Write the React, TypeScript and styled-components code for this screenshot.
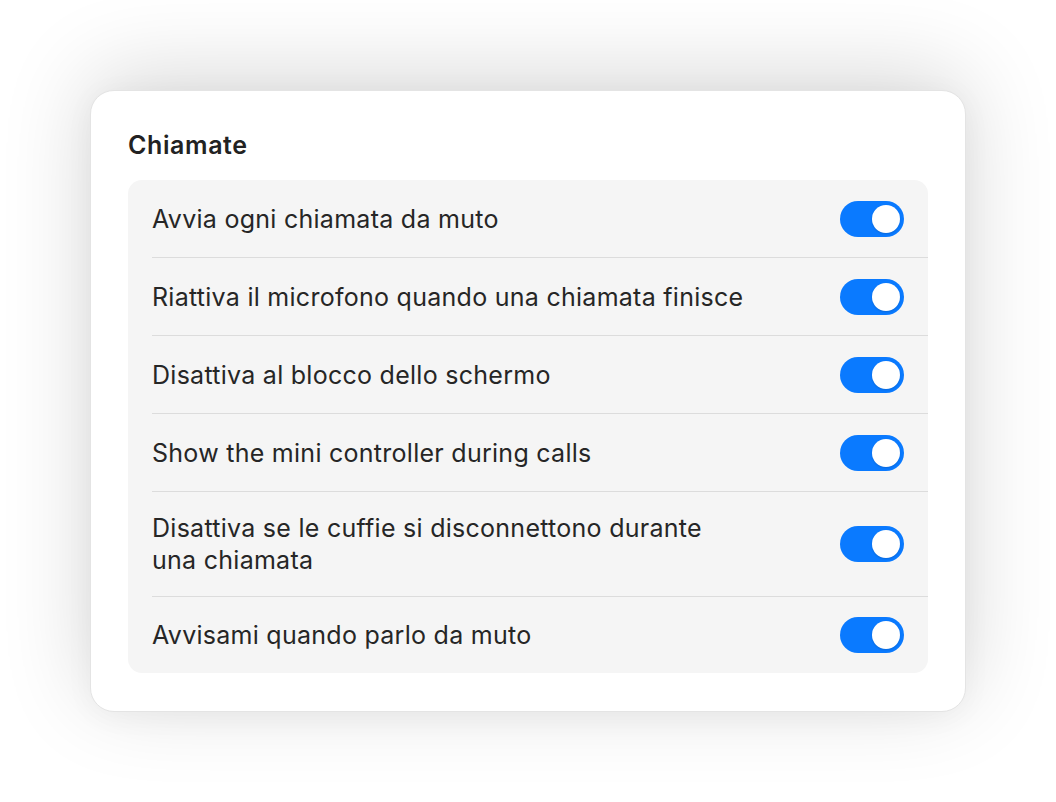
import React from "react";
import styled, { createGlobalStyle } from "styled-components";

const GlobalStyle = createGlobalStyle`
  html, body {
    margin: 0;
    padding: 0;
    background: #ffffff;
  }
  body {
    font-family: Inter, "Noto Sans", "Liberation Sans", sans-serif;
    -webkit-font-smoothing: antialiased;
  }
`;

const Page = styled.div`
  box-sizing: border-box;
  width: 1056px;
  height: 802px;
  padding: 90px;
  background: #ffffff;
`;

const Card = styled.section`
  box-sizing: border-box;
  height: 622px;
  background: #ffffff;
  border: 1px solid #e4e4e4;
  border-radius: 24px;
  padding: 38px 37px 38px 37px;
  box-shadow: 0 -14px 90px rgba(0, 0, 0, 0.16), 0 4px 30px rgba(0, 0, 0, 0.04);
  display: flex;
  flex-direction: column;
  gap: 19px;
`;

const Title = styled.h2`
  margin: 0;
  font-size: 25px;
  line-height: 32px;
  font-weight: 600;
  color: #222222;
  letter-spacing: 0.6px;
`;

const Group = styled.div`
  background: #f5f5f5;
  border-radius: 14px;
  display: flex;
  flex-direction: column;
`;

const Row = styled.div`
  padding-left: 24px;
`;

const RowInner = styled.div<{ $last?: boolean }>`
  box-sizing: border-box;
  min-height: ${(p) => (p.$last ? "76px" : "78px")};
  padding: 20px 24px 20px 0;
  display: flex;
  align-items: center;
  justify-content: space-between;
  gap: 24px;
  border-bottom: ${(p) => (p.$last ? "none" : "1px solid #dcdcdc")};
`;

const Label = styled.span`
  font-size: 25px;
  line-height: 32px;
  font-weight: 400;
  color: #262626;
  letter-spacing: 0.27px;
`;

const Track = styled.span<{ $on: boolean }>`
  flex: none;
  box-sizing: border-box;
  width: 64px;
  height: 36px;
  border-radius: 18px;
  padding: 4px;
  background: ${(p) => (p.$on ? "#0a7aff" : "#e3e3e3")};
  display: flex;
  justify-content: ${(p) => (p.$on ? "flex-end" : "flex-start")};
  align-items: center;
`;

const Knob = styled.span`
  width: 28px;
  height: 28px;
  border-radius: 50%;
  background: #ffffff;
  box-shadow: 0 1px 2px rgba(0, 0, 0, 0.15);
`;

const Toggle = ({ on }: { on: boolean }) => (
  <Track $on={on} role="switch" aria-checked={on}>
    <Knob />
  </Track>
);

const items: { label: React.ReactNode; on: boolean }[] = [
  { label: "Avvia ogni chiamata da muto", on: true },
  { label: "Riattiva il microfono quando una chiamata finisce", on: true },
  { label: "Disattiva al blocco dello schermo", on: true },
  { label: "Show the mini controller during calls", on: true },
  {
    label: (
      <>
        Disattiva se le cuffie si disconnettono durante
        <br />
        una chiamata
      </>
    ),
    on: true,
  },
  { label: "Avvisami quando parlo da muto", on: true },
];

export default function App() {
  return (
    <>
      <GlobalStyle />
      <Page>
        <Card>
          <Title>Chiamate</Title>
          <Group>
            {items.map((it, i) => (
              <Row key={i}>
                <RowInner $last={i === items.length - 1}>
                  <Label>{it.label}</Label>
                  <Toggle on={it.on} />
                </RowInner>
              </Row>
            ))}
          </Group>
        </Card>
      </Page>
    </>
  );
}
